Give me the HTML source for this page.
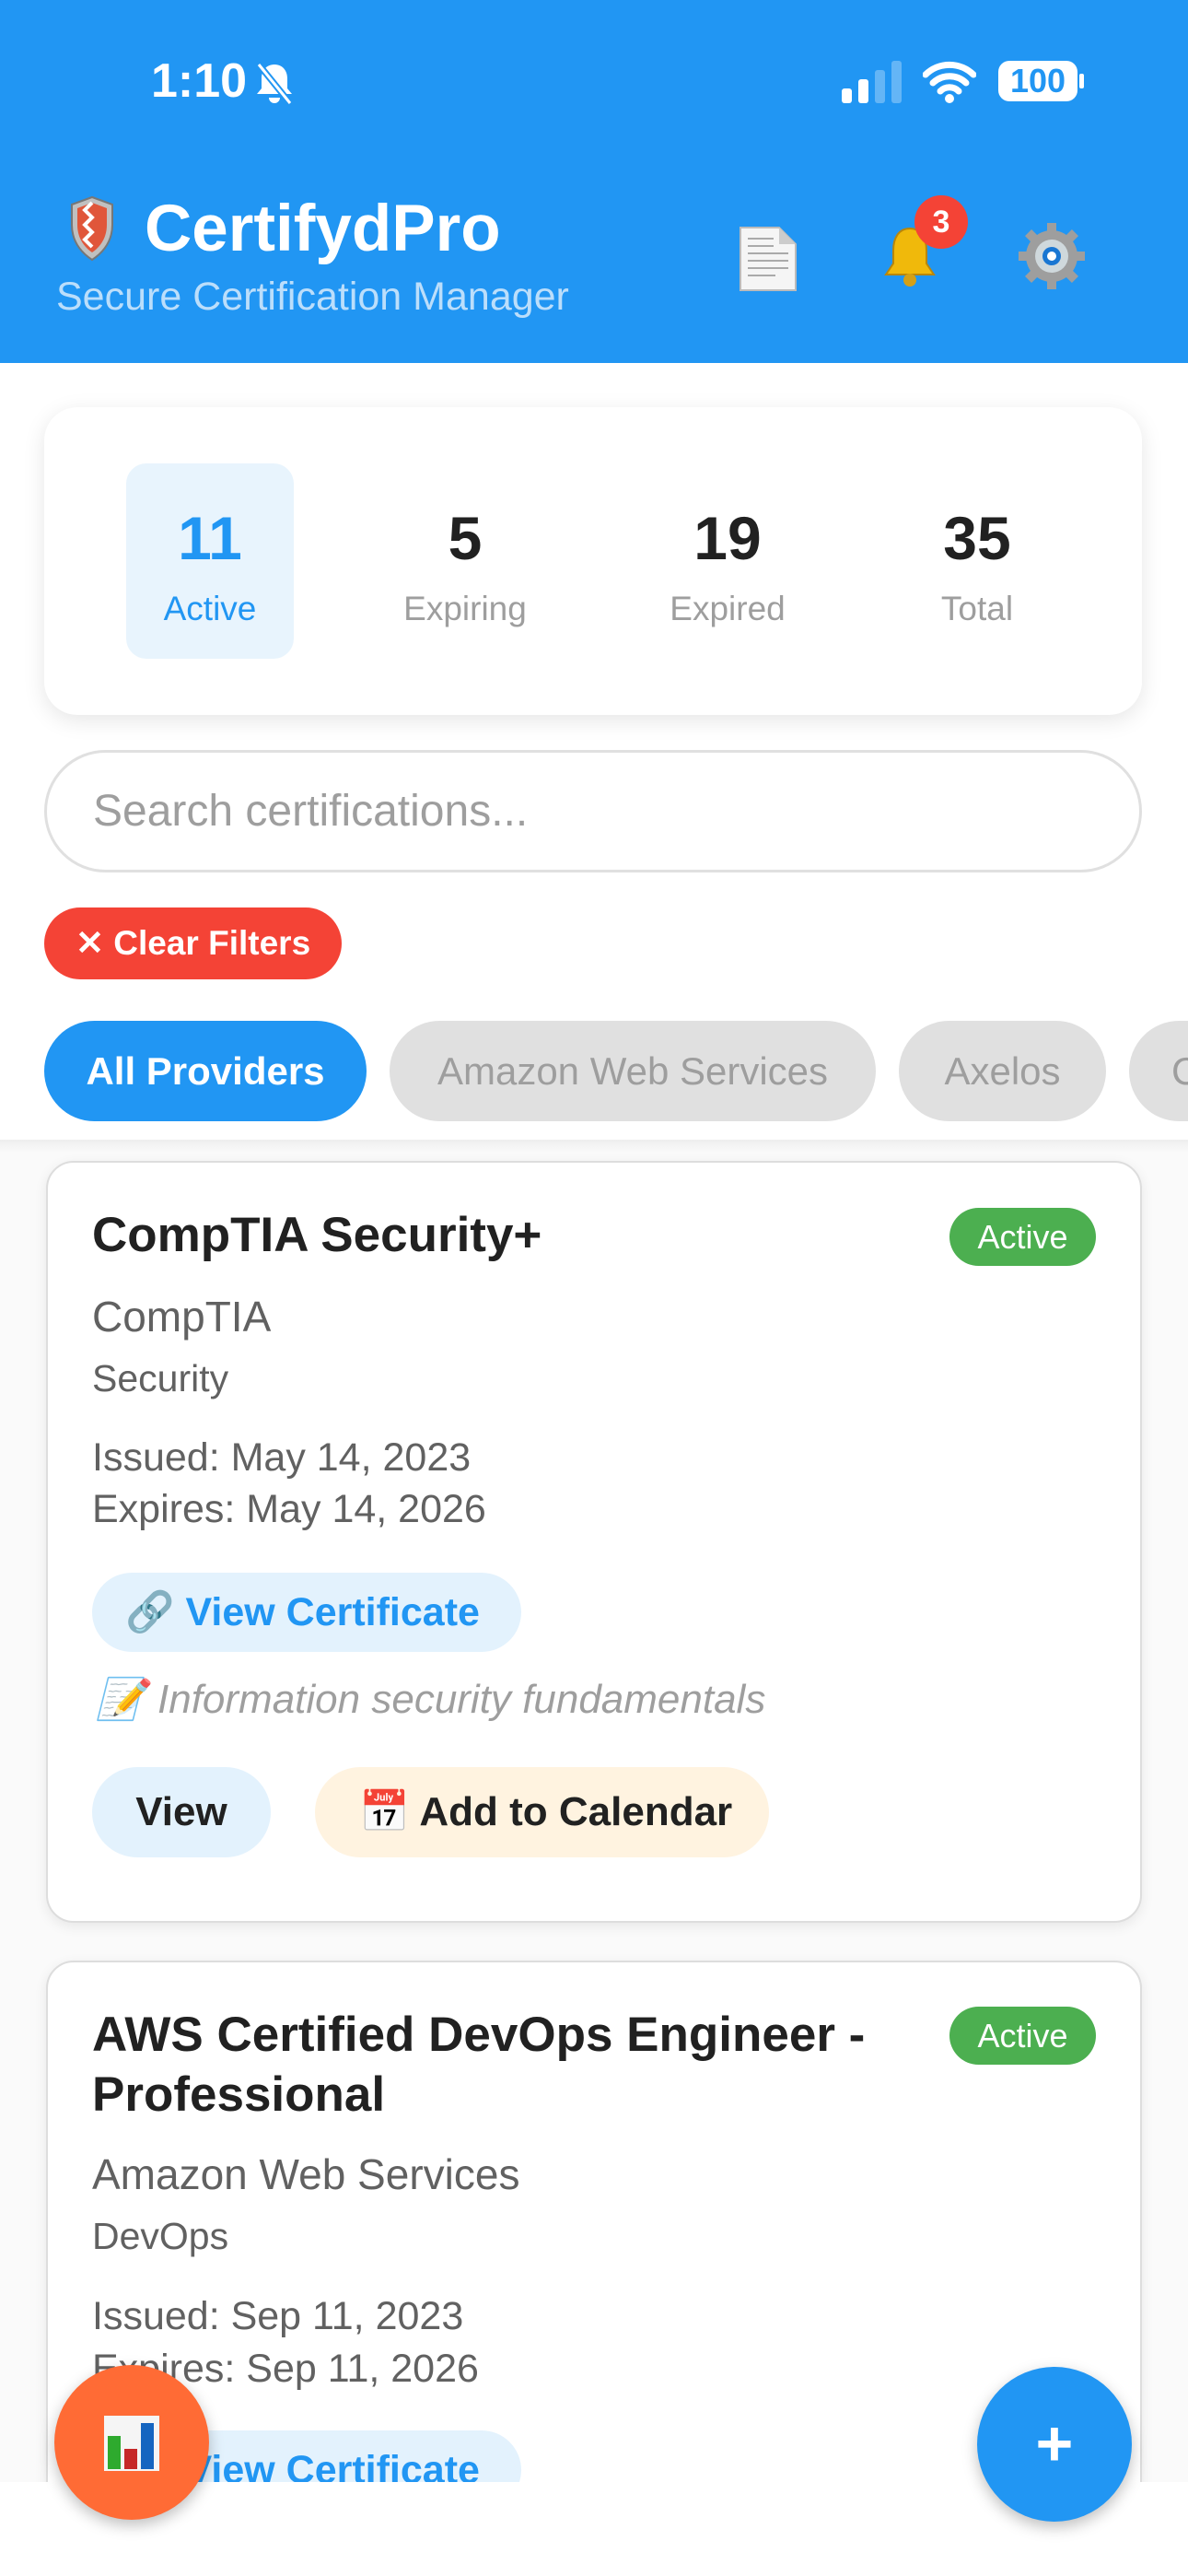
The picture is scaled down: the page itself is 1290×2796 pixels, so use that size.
<!DOCTYPE html>
<html><head><meta charset="utf-8"><style>
*{box-sizing:border-box;margin:0;padding:0}
html,body{width:1290px;height:2796px;overflow:hidden}
body{background:#fafafa;font-family:"Liberation Sans","Noto Sans CJK JP",sans-serif;position:relative}
.abs{position:absolute}
.hdr{left:0;top:0;width:1290px;height:394px;background:#2196f3}
.white{left:0;top:394px;width:1290px;height:843px;background:#fff}
.card{background:#fff;border:2px solid #ddd;border-radius:30px;box-shadow:0 4px 14px rgba(0,0,0,.08)}
.num{font-weight:bold;font-size:66px;color:#212121;text-align:center;width:240px}
.lbl{font-size:37px;color:#9e9e9e;text-align:center;width:240px}
.chip{height:109px;border-radius:55px;background:#e0e0e0;color:#9e9e9e;font-size:42px;line-height:109px;text-align:center}
.t{color:#616161}
</style></head><body>
<div class="abs hdr"></div>
<div class="abs" style="left:164px;top:58px;font-size:52px;font-weight:bold;color:#fff">1:10</div>
<svg class="abs" style="left:275px;top:66px" width="46" height="50" viewBox="0 0 46 50"><path d="M23 4c-9 0-14 7-14 15v11l-5 6h38l-5-6V19c0-8-5-15-14-15z M17 40a6 6 0 0012 0z" fill="#fff"/><path d="M6 4l34 42" stroke="#2196f3" stroke-width="7"/><path d="M6 4l34 42" stroke="#fff" stroke-width="3"/></svg>
<div class="abs" style="left:914px;top:96px;width:11px;height:16px;background:#fff;border-radius:3px"></div>
<div class="abs" style="left:932px;top:86px;width:11px;height:26px;background:#fff;border-radius:3px"></div>
<div class="abs" style="left:950px;top:76px;width:11px;height:36px;background:#64b5f6;border-radius:3px"></div>
<div class="abs" style="left:968px;top:66px;width:11px;height:46px;background:#64b5f6;border-radius:3px"></div>
<svg class="abs" style="left:1002px;top:64px" width="58" height="48" viewBox="0 0 58 48"><path d="M3 17a37 37 0 0152 0M11 26a26 26 0 0136 0M19 35a14 14 0 0120 0" stroke="#fff" stroke-width="7" fill="none" stroke-linecap="round"/><circle cx="29" cy="43" r="5" fill="#fff"/></svg>
<div class="abs" style="left:1084px;top:66px;width:86px;height:44px;background:#fff;border-radius:12px;color:#2196f3;font-weight:bold;font-size:36px;line-height:44px;text-align:center">100</div>
<div class="abs" style="left:1172px;top:80px;width:5px;height:16px;background:#fff;border-radius:2px"></div>
<svg class="abs" style="left:74px;top:212px" width="52" height="72" viewBox="0 0 52 72"><path d="M26 2L4 10v22c0 18 10 30 22 38 12-8 22-20 22-38V10z" fill="#c0c0c0" stroke="#777" stroke-width="2"/><path d="M26 8L10 14v18c0 14 7 24 16 30 9-6 16-16 16-30V14z" fill="#e0563a"/><path d="M26 8l-8 8 8 8-8 8 8 8-8 8 8 8" stroke="#fff" stroke-width="4" fill="none"/></svg>
<div class="abs" style="left:157px;top:208px;font-size:71px;font-weight:bold;color:#fff">CertifydPro</div>
<div class="abs" style="left:61px;top:298px;font-size:43px;color:#bbdefb">Secure Certification Manager</div>
<svg class="abs" style="left:802px;top:245px" width="64" height="72" viewBox="0 0 64 72"><path d="M2 2h42l18 18v50H2z" fill="#f5f5f5" stroke="#bbb" stroke-width="2"/><path d="M44 2v18h18" fill="#ccc"/><path d="M10 14h28M10 22h28M10 30h44M10 38h44M10 46h44M10 54h30" stroke="#aaa" stroke-width="2"/></svg>
<svg class="abs" style="left:948px;top:238px" width="80" height="80" viewBox="0 0 80 80"><path d="M40 10c-12 0-18 10-18 24v14l-8 12h52l-8-12V34c0-14-6-24-18-24z" fill="#f0b90b" stroke="#b8860b" stroke-width="2"/><circle cx="40" cy="66" r="7" fill="#d4a017"/></svg>
<div class="abs" style="left:993px;top:212px;width:58px;height:58px;border-radius:50%;background:#f44336;color:#fff;font-weight:bold;font-size:34px;line-height:58px;text-align:center">3</div>
<svg class="abs" style="left:1104px;top:240px" width="76" height="76" viewBox="0 0 76 76"><g fill="#9e9e9e"><circle cx="38" cy="38" r="28"/><g id="t"><rect x="33" y="2" width="10" height="14"/><rect x="33" y="60" width="10" height="14"/><rect x="2" y="33" width="14" height="10"/><rect x="60" y="33" width="14" height="10"/></g><use href="#t" transform="rotate(45 38 38)"/></g><circle cx="38" cy="38" r="18" fill="#cfd8dc"/><circle cx="38" cy="38" r="10" fill="#1976d2"/><circle cx="38" cy="38" r="5" fill="#fff"/></svg>

<div class="abs white"></div>
<div class="abs card" style="left:48px;top:442px;width:1192px;height:334px;border:none;border-radius:36px;box-shadow:0 6px 24px rgba(0,0,0,.1)"></div>
<div class="abs" style="left:137px;top:503px;width:182px;height:212px;background:#e8f4fd;border-radius:22px"></div>
<div class="abs num" style="left:108px;top:546px;color:#2196f3">11</div>
<div class="abs lbl" style="left:108px;top:640px;color:#2196f3">Active</div>
<div class="abs num" style="left:385px;top:546px">5</div>
<div class="abs lbl" style="left:385px;top:640px">Expiring</div>
<div class="abs num" style="left:670px;top:546px">19</div>
<div class="abs lbl" style="left:670px;top:640px">Expired</div>
<div class="abs num" style="left:941px;top:546px">35</div>
<div class="abs lbl" style="left:941px;top:640px">Total</div>

<div class="abs" style="left:48px;top:814px;width:1192px;height:133px;border:3px solid #e0e0e0;border-radius:67px;background:#fff;font-size:48px;color:#9e9e9e;line-height:127px;padding-left:50px">Search certifications...</div>
<div class="abs" style="left:48px;top:985px;width:323px;height:78px;border-radius:39px;background:#f44336;color:#fff;font-size:37px;line-height:78px;padding-left:34px;font-weight:bold">✕ Clear Filters</div>
<div class="abs chip" style="left:48px;top:1108px;width:350px;background:#2196f3;color:#fff;font-weight:bold">All Providers</div>
<div class="abs chip" style="left:423px;top:1108px;width:528px">Amazon Web Services</div>
<div class="abs chip" style="left:976px;top:1108px;width:225px">Axelos</div>
<div class="abs chip" style="left:1226px;top:1108px;width:200px;text-align:left;padding-left:46px">C</div>
<div class="abs" style="left:0;top:1237px;width:1290px;height:14px;background:linear-gradient(#eee,#fafafa)"></div>

<div class="abs card" style="left:50px;top:1260px;width:1190px;height:827px"></div>
<div class="abs" style="left:100px;top:1310px;font-size:53px;font-weight:bold;color:#212121">CompTIA Security+</div>
<div class="abs" style="left:1031px;top:1311px;width:159px;height:63px;border-radius:32px;background:#4caf50;color:#fff;font-size:36px;line-height:63px;text-align:center">Active</div>
<div class="abs t" style="left:100px;top:1402px;font-size:46px">CompTIA</div>
<div class="abs t" style="left:100px;top:1473px;font-size:41px">Security</div>
<div class="abs t" style="left:100px;top:1558px;font-size:43px">Issued: May 14, 2023</div>
<div class="abs t" style="left:100px;top:1614px;font-size:43px">Expires: May 14, 2026</div>
<div class="abs" style="left:100px;top:1707px;width:466px;height:86px;border-radius:43px;background:#e3f2fd;color:#2196f3;font-weight:bold;font-size:43px;line-height:86px;padding-left:36px">🔗 View Certificate</div>
<div class="abs" style="left:104px;top:1818px;font-size:44px;font-style:italic;color:#9e9e9e">📝 Information security fundamentals</div>
<div class="abs" style="left:100px;top:1918px;width:194px;height:98px;border-radius:49px;background:#e3f2fd;color:#212121;font-size:44px;line-height:98px;text-align:center;font-weight:bold">View</div>
<div class="abs" style="left:342px;top:1918px;width:493px;height:98px;border-radius:49px;background:#fff3e0;color:#212121;font-size:44px;line-height:98px;padding-left:48px;font-weight:bold">📅 Add to Calendar</div>

<div class="abs card" style="left:50px;top:2128px;width:1190px;height:600px"></div>
<div class="abs" style="left:100px;top:2176px;width:900px;font-size:53px;font-weight:bold;color:#212121;line-height:65px">AWS Certified DevOps Engineer - Professional</div>
<div class="abs" style="left:1031px;top:2178px;width:159px;height:63px;border-radius:32px;background:#4caf50;color:#fff;font-size:36px;line-height:63px;text-align:center">Active</div>
<div class="abs t" style="left:100px;top:2333px;font-size:46px">Amazon Web Services</div>
<div class="abs t" style="left:100px;top:2404px;font-size:41px">DevOps</div>
<div class="abs t" style="left:100px;top:2490px;font-size:43px">Issued: Sep 11, 2023</div>
<div class="abs t" style="left:100px;top:2547px;font-size:43px">Expires: Sep 11, 2026</div>
<div class="abs" style="left:100px;top:2638px;width:466px;height:86px;border-radius:43px;background:#e3f2fd;color:#2196f3;font-weight:bold;font-size:43px;line-height:86px;padding-left:36px">🔗 View Certificate</div>
<div class="abs" style="left:0;top:2694px;width:1290px;height:102px;background:#fff"></div>

<div class="abs" style="left:59px;top:2567px;width:168px;height:168px;border-radius:50%;background:#ff6b35;box-shadow:0 6px 16px rgba(0,0,0,.25)"></div>
<svg class="abs" style="left:111px;top:2620px" width="64" height="64" viewBox="0 0 64 64"><rect x="2" y="2" width="60" height="60" fill="#f5f5f5"/><rect x="6" y="24" width="14" height="36" fill="#2eaa2e"/><rect x="24" y="38" width="14" height="22" fill="#c62828"/><rect x="42" y="10" width="14" height="50" fill="#1565c0"/></svg>
<div class="abs" style="left:1061px;top:2569px;width:168px;height:168px;border-radius:50%;background:#2196f3;box-shadow:0 6px 16px rgba(0,0,0,.25);color:#fff;font-size:70px;font-weight:bold;line-height:166px;text-align:center">+</div>
</body></html>
